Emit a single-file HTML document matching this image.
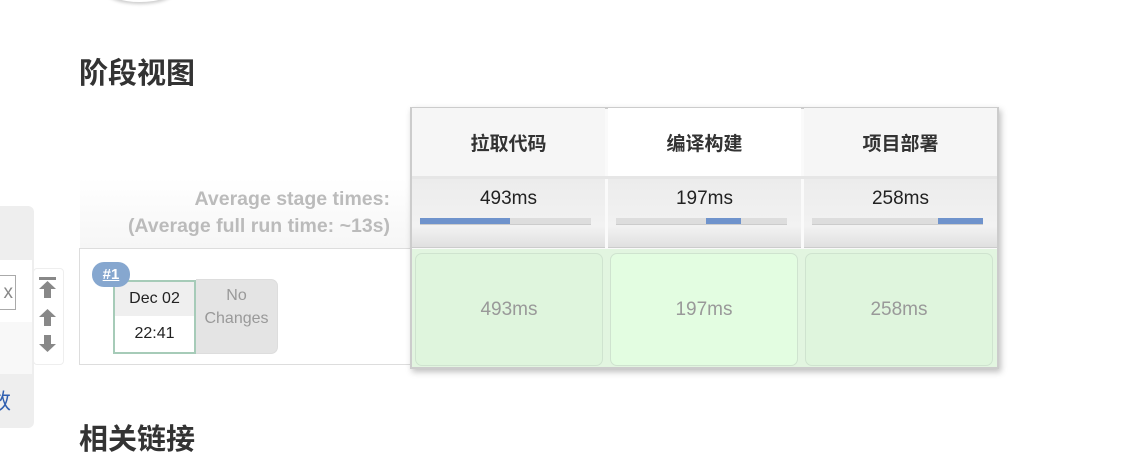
<!DOCTYPE html>
<html><head><meta charset="utf-8"><style>
*{margin:0;padding:0;box-sizing:border-box}
body{width:1122px;height:460px;background:#fff;position:relative;overflow:hidden;font-family:"Liberation Sans","Noto Sans CJK SC",sans-serif}
.a{position:absolute}
h2{position:absolute;font-size:29px;font-weight:bold;color:#333;font-family:"Liberation Sans","Noto Sans CJK SC",sans-serif}
.hd{position:absolute;top:108px;height:68px;display:flex;align-items:center;justify-content:center;font-weight:bold;font-size:19px;color:#333}
.avg{position:absolute;top:179px;height:69px;background:linear-gradient(#ececec,#f2f2f2 70%,#e0e0e0);border-bottom:1px solid #ccc;text-align:center;font-size:19px;color:#222;padding-top:9px}
.bar{position:absolute;left:8px;right:14px;top:39px;height:7px;background:#ddd;border-bottom:1px solid #ccc}
.bar i{position:absolute;top:0;height:6px;background:#6f93cc}
.cell{position:absolute;top:253px;height:113px;border:1px solid #cfe3cf;border-radius:7px;display:flex;align-items:center;justify-content:center;font-size:19px;color:#999}
</style></head><body>
<div class="a" style="left:105px;top:-24px;width:70px;height:26px;border-radius:50%;box-shadow:0 2px 3px #ccc"></div>
<h2 style="left:79px;top:50px">阶段视图</h2>
<h2 style="left:79px;top:416px">相关链接</h2>

<div class="a" style="left:0;top:206px;width:34px;height:222px;background:#eee;border-radius:0 6px 6px 0"></div>
<div class="a" style="left:0;top:260px;width:32px;height:62px;background:#fff"></div>
<div class="a" style="left:0;top:322px;width:32px;height:52px;background:#f8f8f8"></div>
<div class="a" style="left:-20px;top:275px;width:36px;height:35px;border:1px solid #aaa;background:#fff;color:#888;font-size:19px;line-height:33px;text-align:right;padding-right:2px">x</div>
<div class="a" style="left:-11px;top:384px;color:#2f5fb0;font-size:22px;font-family:'Noto Sans CJK SC',sans-serif">数</div>
<div class="a" style="left:33px;top:268px;width:31px;height:97px;border:1px solid #eee;border-radius:4px;background:#fff"></div>
<svg class="a" style="left:38px;top:276px" width="20" height="85" viewBox="0 0 20 85" fill="#888">
<rect x="1" y="1" width="17" height="3"/><path d="M9.5 5L18 13H13V22H6V13H1Z"/>
<path d="M9.5 33L18 41H13V50H6V41H1Z"/>
<path d="M6 59H13V68H18L9.5 76L1 68H6Z"/></svg>

<div class="a" style="left:80px;top:178px;width:330px;height:70px;background:linear-gradient(#fff,#f6f6f6)"></div>
<div class="a" style="left:80px;top:186px;width:310px;text-align:right;color:#bbb;font-weight:bold;font-size:19.5px;line-height:27px">Average stage times:<br>(Average full run time: ~13s)</div>
<div class="a" style="left:79px;top:248px;width:920px;height:117px;border:1px solid #ddd;border-right:none"></div>

<div class="a" style="left:113px;top:280px;width:83px;height:74px;border:2px solid #a6cbb8;background:#fff"></div>
<div class="a" style="left:115px;top:282px;width:79px;height:34px;background:#efefef;text-align:center;line-height:34px;font-size:16px;color:#222">Dec 02</div>
<div class="a" style="left:115px;top:318px;width:79px;height:34px;text-align:center;line-height:32px;font-size:16px;color:#222">22:41</div>
<div class="a" style="left:196px;top:279px;width:82px;height:75px;background:#e4e4e4;border:1px solid #ddd;border-left:none;border-radius:0 7px 7px 0;text-align:center;color:#999;font-size:16px;line-height:23px;padding-top:4px">No<br>Changes</div>
<div class="a" style="left:92px;top:262px;width:38px;height:25px;background:#86a7cf;border-radius:12px;color:#fff;font-weight:bold;font-size:15px;text-align:center;line-height:25px;text-decoration:underline">#1</div>

<div class="a" style="left:410px;top:107px;width:589px;height:262px;border:2px solid #ccc;background:#fafafa;box-shadow:2px 3px 6px rgba(0,0,0,.25)"></div>
<div class="a" style="left:412px;top:249px;width:585px;height:118px;background:#e2f5e0"></div>
<div class="hd" style="left:412px;width:193px;background:#f6f6f6">拉取代码</div>
<div class="hd" style="left:608px;width:193px;background:#fff">编译构建</div>
<div class="hd" style="left:804px;width:193px;background:#f6f6f6">项目部署</div>
<div class="a" style="left:412px;top:176px;width:585px;height:3px;background:#e6e6e6"></div>
<div class="avg" style="left:412px;width:193px">493ms<div class="bar"><i style="left:0;width:90px"></i></div></div>
<div class="avg" style="left:608px;width:193px">197ms<div class="bar"><i style="left:90px;width:35px"></i></div></div>
<div class="avg" style="left:804px;width:193px">258ms<div class="bar"><i style="left:126px;width:45px"></i></div></div>
<div class="cell" style="left:415px;width:188px;background:#dff5dd">493ms</div>
<div class="cell" style="left:610px;width:188px;background:#e3fde1">197ms</div>
<div class="cell" style="left:805px;width:188px;background:#dff5dd">258ms</div>
</body></html>
